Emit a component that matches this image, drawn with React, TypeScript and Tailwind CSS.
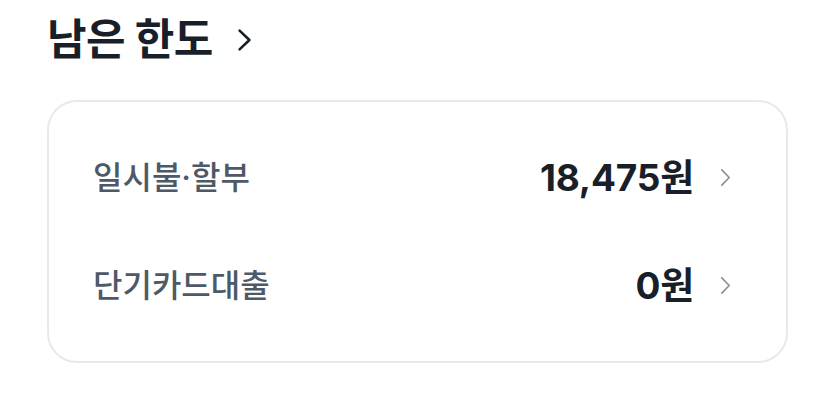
const rows = [
  { label: "일시불·할부", value: "18,475원" },
  { label: "단기카드대출", value: "0원" },
];

const Chevron = ({ className, w, h, stroke }: { className: string; w: number; h: number; stroke: number }) => (
  <svg width={w} height={h} viewBox={`0 0 ${w} ${h}`} fill="none" className={className}>
    <polyline
      points={`${stroke},${stroke} ${w - stroke},${h / 2} ${stroke},${h - stroke}`}
      stroke="currentColor"
      strokeWidth={stroke}
      strokeLinecap="round"
      strokeLinejoin="round"
    />
  </svg>
);

const App: React.FC = () => {
  return (
    <div
      className="w-[835px] h-[412px] bg-white px-[47px] pt-[10px]"
      style={{ fontFamily: 'Inter, "Noto Sans CJK KR", sans-serif' }}
    >
      {/* Header */}
      <div className="flex items-center gap-[24px] h-[58px]">
        <h1 className="text-[43px] font-bold text-[#191f28] tracking-[-0.5px] leading-none">남은 한도</h1>
        <Chevron className="text-[#191f28] mt-[2px]" w={15} h={24} stroke={2.6} />
      </div>

      {/* Card */}
      <div className="mt-[32px] h-[263px] rounded-[30px] border-2 border-[#e8e9eb] flex flex-col justify-center px-[44px]">
        {rows.map((row) => (
          <div key={row.label} className="flex items-center justify-between h-[108px]">
            <span className="text-[32px] font-medium text-[#4e5968] leading-none">{row.label}</span>
            <div className="flex items-center gap-[26px] pr-[11px]">
              <span className="text-[37px] font-bold text-[#191f28] tracking-[-0.2px] leading-none">{row.value}</span>
              <Chevron className="text-[#8b95a1]" w={11} h={19} stroke={1.8} />
            </div>
          </div>
        ))}
      </div>
    </div>
  );
};

export default App;
